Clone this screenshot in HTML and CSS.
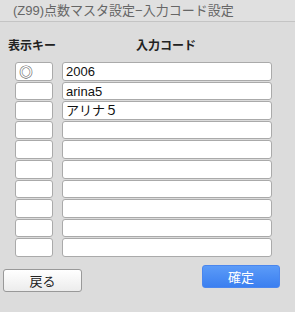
FILE: index.html
```html
<!DOCTYPE html>
<html lang="ja">
<head>
    <meta charset="UTF-8">
    <title>入力コード設定</title>
    <link rel="stylesheet" href="styles.css">
</head>
<body>
    <div class="window">
        <div class="titlebar">(Z99)点数マスタ設定−入力コード設定</div>
        <div class="content">
            <div class="head">
                <span class="head-key">表示キー</span>
                <span class="head-code">入力コード</span>
            </div>
            <div class="rows">
                <div class="row"><div class="key">◎</div><div class="code">2006</div></div>
                <div class="row"><div class="key"></div><div class="code">arina5</div></div>
                <div class="row"><div class="key"></div><div class="code">アリナ５</div></div>
                <div class="row"><div class="key"></div><div class="code"></div></div>
                <div class="row"><div class="key"></div><div class="code"></div></div>
                <div class="row"><div class="key"></div><div class="code"></div></div>
                <div class="row"><div class="key"></div><div class="code"></div></div>
                <div class="row"><div class="key"></div><div class="code"></div></div>
                <div class="row"><div class="key"></div><div class="code"></div></div>
                <div class="row"><div class="key"></div><div class="code"></div></div>
            </div>
            <div class="buttons">
                <button class="btn btn-back">戻る</button>
                <button class="btn btn-ok">確定</button>
            </div>
        </div>
    </div>
</body>
</html>
```

FILE: styles.css
```css
body {
    margin: 0;
    padding: 0;
    background-color: #dcdcdc;
    font-family: "Liberation Sans", Arial, "Noto Sans CJK JP", sans-serif;
}
.window {
    width: 295px;
    height: 312px;
    background-color: #dcdcdc;
}
.titlebar {
    height: 22px;
    line-height: 22px;
    padding-left: 13px;
    font-size: 13px;
    color: #666;
    background-color: #e0e0e0;
    border-bottom: 1px solid #c4c4c4;
    box-sizing: border-box;
}
.content {
    padding: 0 0 0 3px;
}
.head {
    display: flex;
    height: 40px;
    align-items: center;
    padding-top: 5px;
    box-sizing: border-box;
    font-size: 12px;
    font-weight: bold;
    color: #222;
}
.head-key {
    margin-left: 5px;
}
.head-code {
    margin-left: 80px;
}
.rows {
    display: flex;
    flex-direction: column;
    gap: 1px;
}
.row {
    display: flex;
    height: 18.6px;
}
.key, .code {
    background-color: #fff;
    border: 1px solid #aaa;
    border-radius: 3px;
    box-sizing: border-box;
    font-size: 13px;
    line-height: 17px;
    color: #111;
}
.key {
    width: 38px;
    margin-left: 12px;
    padding-left: 3px;
    font-family: "Noto Sans CJK JP", sans-serif;
    font-size: 14px;
    font-weight: bold;
    line-height: 16px;
    color: #666;
}
.code {
    width: 210px;
    margin-left: 9px;
    padding-left: 3px;
}
.buttons {
    display: flex;
    justify-content: space-between;
    align-items: flex-start;
    margin-top: 8px;
    padding-right: 15px;
}
.btn {
    font-family: "Liberation Sans", Arial, "Noto Sans CJK JP", sans-serif;
    font-size: 13px;
    border-radius: 3px;
    height: 23px;
    padding: 0;
}
.btn-back {
    width: 79px;
    margin-top: 4px;
    background: linear-gradient(#ffffff, #ececec);
    border: 1px solid #999;
    color: #222;
}
.btn-ok {
    width: 78px;
    background: linear-gradient(#5b9bf8, #3b7ff0);
    border: 1px solid #4a86ee;
    color: #fff;
}
```
